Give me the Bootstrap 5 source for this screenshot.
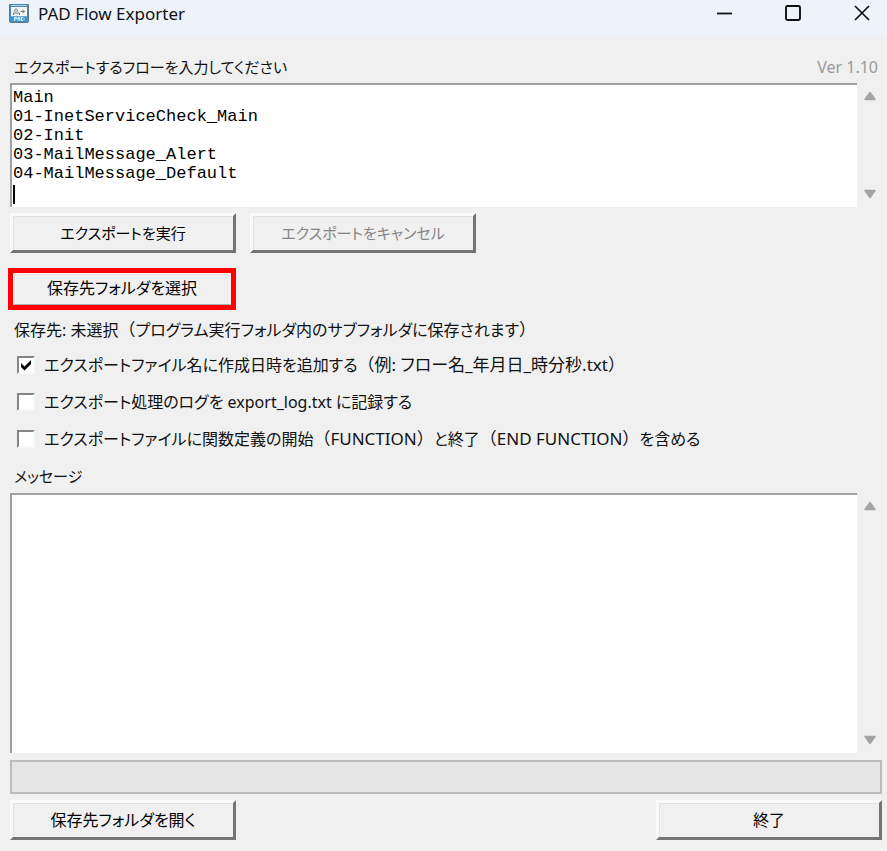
<!DOCTYPE html>
<html lang="ja">
<head>
<meta charset="utf-8">
<meta name="viewport" content="width=device-width, initial-scale=1">
<title>PAD Flow Exporter</title>
<link href="https://cdn.jsdelivr.net/npm/bootstrap@5.3.0/dist/css/bootstrap.min.css" rel="stylesheet">
<style>
  body {
    background: #f0f0f0;
    color: #111;
    font-family: "Noto Sans", "Noto Sans CJK JP", sans-serif;
    font-size: 16px;
    line-height: 24px;
    font-feature-settings: "palt";
  }
  .wide { font-size: 17px; font-feature-settings: normal; }
  .aside-text { font-size: 17px; }
  .kana-text { font-size: 15px; }
  .titlebar { background: #eef3fa; height: 37px; padding: 0 14px 0 8px; }
  .title-text { font-size: 17px; line-height: 28px; }
  .win-btn { background: none; border: 0; padding: 0; width: 22px; height: 26px; display: flex; align-items: center; justify-content: center; }
  .win-btns { gap: 47px; }
  .client { padding: 18px 5px 11px 10px; }
  .label-row { padding: 0 4px 4px; }
  .version { color: #999; }
  .sunken {
    background: #fff;
    border: 0;
    border-top: 2px solid #a0a0a0;
    border-left: 2px solid #a0a0a0;
    border-radius: 0;
    outline: 0;
    resize: none;
    overflow: hidden;
    padding: 1px;
    font-family: "Liberation Mono", "Noto Sans CJK JP", monospace;
    font-size: 17px;
    line-height: 19px;
    color: #000;
    display: block;
    width: 100%;
  }
  .flow-box { height: 124px; padding-top: 3px; }
  .caret { left: 3px; bottom: 3px; width: 2px; height: 19px; background: #000; }
  .scroll-rail { width: 25px; padding: 6px 0; }
  .rail-btn { background: none; border: 0; padding: 0; width: 25px; height: 14px; display: flex; align-items: center; justify-content: center; }
  .run-row { gap: 14px; padding-top: 6px; }
  .raised {
    width: 226px;
    height: 40px;
    background: #f0f0f0;
    border: 3px solid;
    border-color: #fafafa #747474 #747474 #fafafa;
    box-shadow: inset 1px 1px #e2e2e2;
    color: #000;
    padding: 0;
    font-feature-settings: inherit;
  }
  .raised:disabled { color: #858585; }
  .marked { border: 5px solid #f00; width: 228px; margin: 15px 0 0 -2px; }
  .marked .raised { width: 100%; height: 32px; border-width: 1px; border-color: #fafafa #f0f0f0 #b0b0b0 #fafafa; padding-bottom: 3px; }
  .save-path { padding: 8px 4px 11px; }
  .options { gap: 13px; padding-left: 7px; }
  .options label { padding-left: 9px; }
  .tick {
    appearance: none;
    width: 18px;
    height: 18px;
    margin: 0;
    background: #fff;
    border: 2px solid;
    border-color: #858585 #f8f8f8 #f8f8f8 #858585;
  }
  .tick:checked {
    background: #fff url("data:image/svg+xml,%3Csvg xmlns='http://www.w3.org/2000/svg' viewBox='0 0 14 14'%3E%3Cpath d='M2 5l3.500 3.500L12 2v4L5.500 12.500 2 9z' fill='%23000'/%3E%3C/svg%3E") center / 14px 14px no-repeat;
  }
  .msg-label { padding: 13px 4px 5px; }
  .meter { height: 34px; margin: 7px 0 6px; border: 2px solid #bcbcbc; border-radius: 0; background: #e6e6e6; }
</style>
<script src="https://cdn.jsdelivr.net/npm/bootstrap@5.3.0/dist/js/bootstrap.bundle.min.js"></script>
</head>
<body class="d-flex flex-column min-vh-100">
<header class="titlebar d-flex align-items-start justify-content-between">
  <div class="d-flex align-items-start">
    <svg class="mt-1 me-2" width="22" height="20" viewBox="0 0 22 20" aria-hidden="true">
      <rect x="1" y="-1" width="20" height="20" rx="2.500" fill="#4d87b0"/>
      <rect x="1.500" y="-.5" width="19" height="19" rx="2.500" fill="none" stroke="#5d7789"/>
      <path d="M3 1.500h16" stroke="#a7d3ee" stroke-width="1"/>
      <rect x="3" y="3" width="16" height="9.500" fill="#f1f4f1"/>
      <path d="M8 4.500l2 2.500H6z" fill="none" stroke="#8d969a"/>
      <path d="M5.500 11V9h6v2M12.500 7.500h4M14.500 6l2 1.500-2 1.500" fill="none" stroke="#70787c"/>
      <rect x="2" y="12.500" width="18" height="5" fill="#3b96d2"/>
      <path d="M6.500 17v-3.500h2v1.500h-2M10 17v-3.500h2V17M10 15h2M13.500 13.500h1.500l1 1v1l-1 1h-1.500z" fill="none" stroke="#d8edf8"/>
    </svg>
    <span class="title-text">PAD Flow Exporter</span>
  </div>
  <div class="win-btns d-flex">
    <button type="button" class="win-btn" aria-label="最小化"><svg width="18" height="18" viewBox="0 0 18 18"><path d="M2 9.500h15" stroke="#111" stroke-width="1.800"/></svg></button>
    <button type="button" class="win-btn" aria-label="最大化"><svg width="18" height="18" viewBox="0 0 18 18"><rect x="2" y="2" width="14" height="14" rx="1.500" fill="none" stroke="#111" stroke-width="1.900"/></svg></button>
    <button type="button" class="win-btn" aria-label="閉じる"><svg width="18" height="18" viewBox="0 0 18 18"><path d="M2 2l14 14M16 2L2 16" stroke="#111" stroke-width="1.700"/></svg></button>
  </div>
</header>

<main class="client d-flex flex-column flex-grow-1">
  <div class="label-row d-flex justify-content-between">
    <label for="flows" class="kana-text">エクスポートするフローを入力してください</label>
    <span class="version">Ver 1.10</span>
  </div>
  <div class="d-flex">
    <div class="position-relative flex-grow-1">
      <textarea id="flows" class="sunken flow-box" spellcheck="false">Main
01-InetServiceCheck_Main
02-Init
03-MailMessage_Alert
04-MailMessage_Default
</textarea>
      <span class="caret position-absolute"></span>
    </div>
    <div class="scroll-rail d-flex flex-column justify-content-between">
      <button type="button" class="rail-btn" aria-label="上へスクロール"><svg width="14" height="10" viewBox="0 0 14 10"><path d="M7 1.500L12 8.500H2z" fill="#a3a3a3" stroke="#a3a3a3" stroke-width="1.500" stroke-linejoin="round"/></svg></button>
      <button type="button" class="rail-btn" aria-label="下へスクロール"><svg width="14" height="10" viewBox="0 0 14 10"><path d="M7 8.500L2 1.500h10z" fill="#a3a3a3" stroke="#a3a3a3" stroke-width="1.500" stroke-linejoin="round"/></svg></button>
    </div>
  </div>

  <div class="run-row d-flex">
    <button type="button" class="raised kana-text">エクスポートを実行</button>
    <button type="button" class="raised kana-text" disabled>エクスポートをキャンセル</button>
  </div>
  <div class="marked"><button type="button" class="raised d-block">保存先フォルダを選択</button></div>

  <div class="save-path">保存先: 未選択<span class="wide">（</span>プログラム実行フォルダ内のサブフォルダに保存されます<span class="wide">）</span></div>

  <div class="options d-flex flex-column">
    <div class="d-flex align-items-center">
      <input class="tick" type="checkbox" id="opt-date" checked>
      <label for="opt-date">エクスポートファイル名に作成日時を追加する<span class="aside-text"><span class="wide">（</span>例: フロー名_年月日_時分秒.txt<span class="wide">）</span></span></label>
    </div>
    <div class="d-flex align-items-center">
      <input class="tick" type="checkbox" id="opt-log">
      <label for="opt-log">エクスポート処理のログを export_log.txt に記録する</label>
    </div>
    <div class="d-flex align-items-center">
      <input class="tick" type="checkbox" id="opt-func">
      <label for="opt-func">エクスポートファイルに関数定義の開始<span class="wide">（FUNCTION）</span>と終了<span class="wide">（END FUNCTION）</span>を含める</label>
    </div>
  </div>

  <label for="messages" class="msg-label kana-text">メッセージ</label>
  <div class="d-flex flex-grow-1">
    <textarea id="messages" class="sunken flex-grow-1" readonly></textarea>
    <div class="scroll-rail d-flex flex-column justify-content-between">
      <button type="button" class="rail-btn" aria-label="上へスクロール"><svg width="14" height="10" viewBox="0 0 14 10"><path d="M7 1.500L12 8.500H2z" fill="#a3a3a3" stroke="#a3a3a3" stroke-width="1.500" stroke-linejoin="round"/></svg></button>
      <button type="button" class="rail-btn" aria-label="下へスクロール"><svg width="14" height="10" viewBox="0 0 14 10"><path d="M7 8.500L2 1.500h10z" fill="#a3a3a3" stroke="#a3a3a3" stroke-width="1.500" stroke-linejoin="round"/></svg></button>
    </div>
  </div>

  <div class="progress meter" role="progressbar" aria-label="進行状況" aria-valuenow="0" aria-valuemin="0" aria-valuemax="100"></div>
  <div class="d-flex justify-content-between">
    <button type="button" class="raised">保存先フォルダを開く</button>
    <button type="button" class="raised">終了</button>
  </div>
</main>
</body>
</html>
